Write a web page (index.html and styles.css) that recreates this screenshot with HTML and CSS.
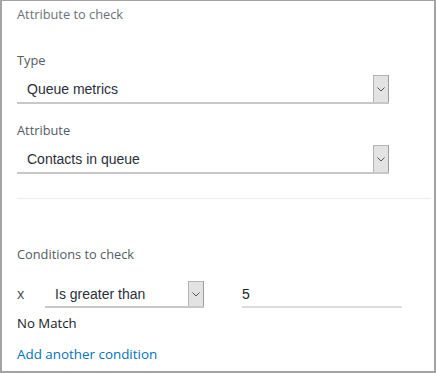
FILE: index.html
```html
<!DOCTYPE html>
<html>
<head>
<meta charset="utf-8">
<link rel="stylesheet" href="styles.css">
</head>
<body>
<div class="panel">
  <div class="heading">Attribute to check</div>

  <div class="label label-type">Type</div>
  <div class="select wide">
    <span class="select-text">Queue metrics</span>
    <span class="select-btn"><svg width="8" height="5" viewBox="0 0 8 5"><path d="M0.5 0.5 L4 4 L7.5 0.5" fill="none" stroke="#555" stroke-width="1"/></svg></span>
  </div>

  <div class="label label-attr">Attribute</div>
  <div class="select wide">
    <span class="select-text">Contacts in queue</span>
    <span class="select-btn"><svg width="8" height="5" viewBox="0 0 8 5"><path d="M0.5 0.5 L4 4 L7.5 0.5" fill="none" stroke="#555" stroke-width="1"/></svg></span>
  </div>

  <div class="divider"></div>

  <div class="label label-cond">Conditions to check</div>
  <div class="cond-row">
    <span class="remove">x</span>
    <div class="select narrow">
      <span class="select-text">Is greater than</span>
      <span class="select-btn short"><svg width="8" height="5" viewBox="0 0 8 5"><path d="M0.5 0.5 L4 4 L7.5 0.5" fill="none" stroke="#555" stroke-width="1"/></svg></span>
    </div>
    <div class="value">5</div>
  </div>

  <div class="nomatch">No Match</div>
  <a class="add-link">Add another condition</a>
</div>
</body>
</html>
```

FILE: styles.css
```css
html, body {
  margin: 0;
  padding: 0;
  background: #ffffff;
}
.panel {
  box-sizing: border-box;
  width: 436px;
  height: 373px;
  border-top: 1px solid #a3a3a3;
  border-left: 2px solid #a3a3a3;
  border-right: 2px solid #a3a3a3;
  border-bottom: 2px solid #a3a3a3;
  padding: 5px 2px 0 15px;
  display: flex;
  flex-direction: column;
  font-family: "Open Sans", "Liberation Sans", sans-serif;
}
.heading {
  font-size: 12.8px;
  line-height: 16px;
  color: #6b7178;
}
.label {
  font-size: 12.8px;
  line-height: 16px;
  color: #545b64;
}
.label-type { margin-top: 30px; }
.label-attr { margin-top: 18px; }
.label-cond { margin-top: 47px; }
.select {
  display: flex;
  align-items: flex-end;
  justify-content: space-between;
  border-bottom: 2px solid #c8c8c8;
  font-family: "Liberation Sans", Arial, sans-serif;
  font-size: 14px;
  color: #2b2f3a;
}
.select.wide {
  width: 372px;
  height: 27px;
  margin-top: 7px;
}
.select-text {
  align-self: center;
  padding-left: 10px;
  padding-top: 1px;
}
.select-btn {
  box-sizing: border-box;
  width: 16px;
  height: 27px;
  background: #e3e3e3;
  border: 1px solid #b4b4b4;
  border-bottom: none;
  border-right-color: #9d9d9d;
  display: flex;
  align-items: center;
  justify-content: center;
}
.select-btn.short { height: 25px; }
.divider {
  height: 1px;
  background: #ececec;
  margin-top: 24px;
  width: 414px;
}
.cond-row {
  display: flex;
  align-items: flex-end;
  margin-top: 19px;
}
.remove {
  width: 28px;
  align-self: center;
  font-size: 14px;
  color: #454b54;
  padding-bottom: 2px;
}
.select.narrow {
  width: 159px;
  height: 25px;
}
.value {
  margin-left: 38px;
  width: 160px;
  height: 24px;
  border-bottom: 2px solid #dcdcdc;
  font-family: "Liberation Sans", Arial, sans-serif;
  font-size: 14px;
  color: #222;
  line-height: 24px;
}
.nomatch {
  margin-top: 6px;
  font-size: 13.2px;
  line-height: 18px;
  color: #16191f;
}
.add-link {
  margin-top: 13px;
  font-size: 13.4px;
  line-height: 18px;
  color: #0073bb;
}
```
